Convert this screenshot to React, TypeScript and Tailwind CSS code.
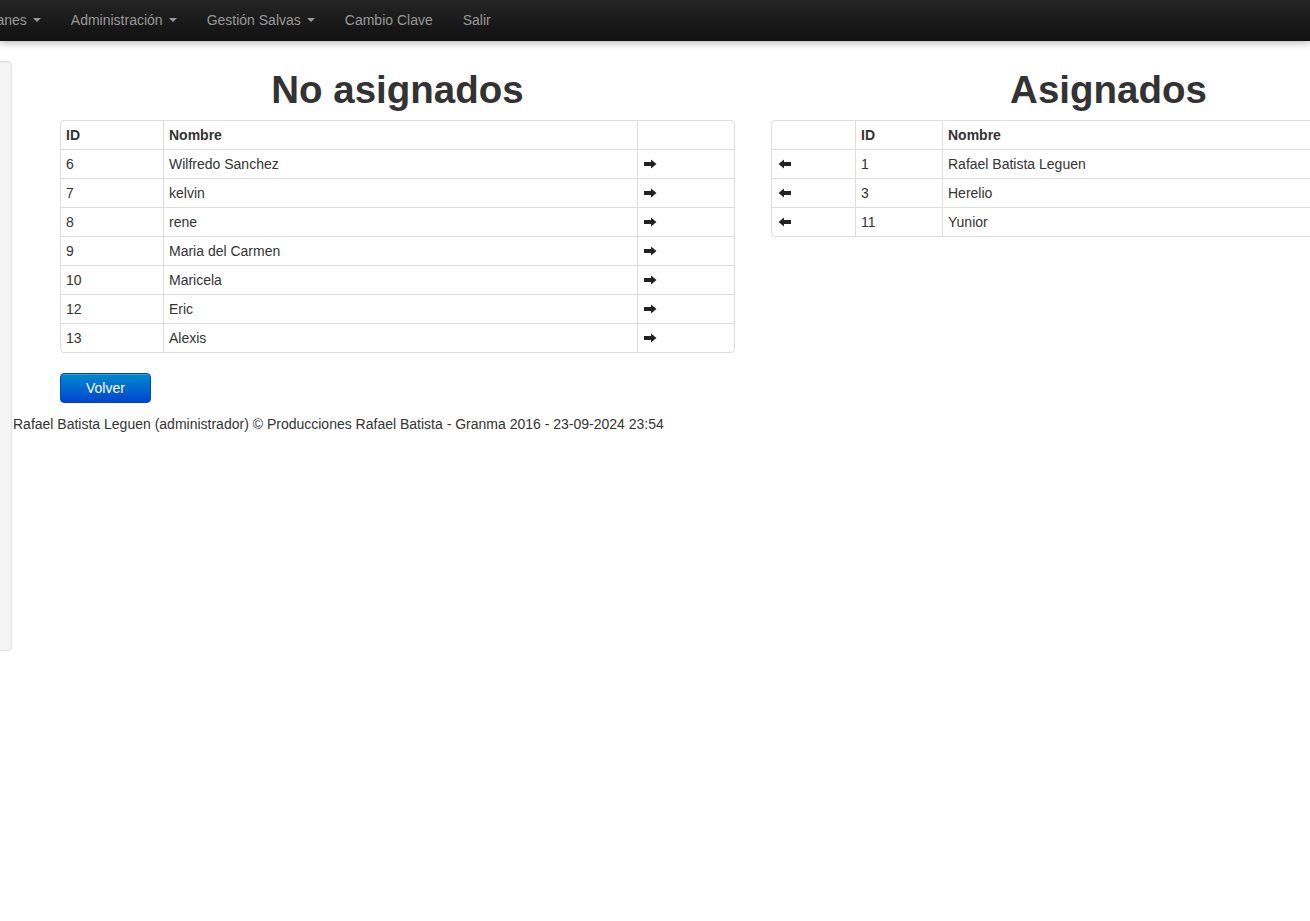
import React from 'react'

const noAsignados = [
  { id: 6, nombre: 'Wilfredo Sanchez' },
  { id: 7, nombre: 'kelvin' },
  { id: 8, nombre: 'rene' },
  { id: 9, nombre: 'Maria del Carmen' },
  { id: 10, nombre: 'Maricela' },
  { id: 12, nombre: 'Eric' },
  { id: 13, nombre: 'Alexis' },
]

const asignados = [
  { id: 1, nombre: 'Rafael Batista Leguen' },
  { id: 3, nombre: 'Herelio' },
  { id: 11, nombre: 'Yunior' },
]

const menu = [
  { label: 'Planes', caret: true },
  { label: 'Administración', caret: true },
  { label: 'Gestión Salvas', caret: true },
  { label: 'Cambio Clave', caret: false },
  { label: 'Salir', caret: false },
]

function Caret() {
  return <span className="ml-[6px] inline-block h-0 w-0 border-x-[4px] border-t-[4px] border-x-transparent border-t-[#999] align-middle" />
}

function ArrowRight() {
  return (
    <svg width="14" height="10" viewBox="0 0 14 10" className="block">
      <path d="M0 3h7V0.5L12.5 5 7 9.5V7H0z" fill="#222" />
    </svg>
  )
}

function ArrowLeft() {
  return (
    <svg width="14" height="10" viewBox="0 0 14 10" className="block">
      <path d="M14 3H7V0.5L1.5 5 7 9.5V7h7z" fill="#222" />
    </svg>
  )
}

const cell = 'border-t border-[#ddd] px-[5px] py-[4px] leading-[20px] align-middle'

export default function App() {
  return (
    <div className="relative h-[921px] w-[1310px] overflow-hidden bg-white text-[14px] text-[#333]" style={{ fontFamily: '"Liberation Sans", Arial, sans-serif' }}>
      {/* navbar */}
      <div className="relative z-10 flex h-[41px] items-center bg-gradient-to-b from-[#242424] to-[#111] pb-[2px] shadow-[0_1px_8px_rgba(0,0,0,0.35)]">
        <ul className="ml-[-31px] flex">
          {menu.map((m) => (
            <li key={m.label} className="flex items-center px-[15px] leading-[20px] text-[#999]">
              {m.label}
              {m.caret && <Caret />}
            </li>
          ))}
        </ul>
      </div>

      <div className="flex">
        {/* sidebar well */}
        <div className="ml-[-200px] mt-[20px] h-[590px] w-[212px] shrink-0 rounded-[4px] border border-[#e3e3e3] bg-[#f5f5f5] shadow-[inset_0_1px_1px_rgba(0,0,0,0.05)]" />

        <div className="flex-1 pt-[19px]">
          <div className="flex gap-[36px] pl-[48px]">
            <div className="w-[675px] shrink-0">
              <h1 className="my-[10px] text-center text-[38.5px] font-bold leading-[40px] text-[#333]">No asignados</h1>
              <table className="mb-[20px] w-full border-separate border-spacing-0 rounded-[4px] border border-[#ddd] text-left">
                <thead>
                  <tr>
                    <th className="w-[102px] px-[5px] py-[4px] leading-[20px] font-bold">ID</th>
                    <th className="border-l border-[#ddd] px-[5px] py-[4px] leading-[20px] font-bold">Nombre</th>
                    <th className="w-[97px] border-l border-[#ddd] px-[5px] py-[4px]"></th>
                  </tr>
                </thead>
                <tbody>
                  {noAsignados.map((r) => (
                    <tr key={r.id}>
                      <td className={cell}>{r.id}</td>
                      <td className={cell + ' border-l'}>{r.nombre}</td>
                      <td className={cell + ' border-l pl-[6px]'}><ArrowRight /></td>
                    </tr>
                  ))}
                </tbody>
              </table>
            </div>

            <div className="w-[675px] shrink-0">
              <h1 className="my-[10px] text-center text-[38.5px] font-bold leading-[40px] text-[#333]">Asignados</h1>
              <table className="w-full border-separate border-spacing-0 rounded-[4px] border border-[#ddd] text-left">
                <thead>
                  <tr>
                    <th className="w-[83px] px-[5px] py-[4px] leading-[20px]"></th>
                    <th className="w-[87px] border-l border-[#ddd] px-[5px] py-[4px] leading-[20px] font-bold">ID</th>
                    <th className="border-l border-[#ddd] px-[5px] py-[4px] leading-[20px] font-bold">Nombre</th>
                  </tr>
                </thead>
                <tbody>
                  {asignados.map((r) => (
                    <tr key={r.id}>
                      <td className={cell + ' pl-[5px]'}><ArrowLeft /></td>
                      <td className={cell + ' border-l'}>{r.id}</td>
                      <td className={cell + ' border-l'}>{r.nombre}</td>
                    </tr>
                  ))}
                </tbody>
              </table>
            </div>
          </div>

          <div className="pl-[48px]">
            <button className="h-[30px] rounded-[4px] border border-[#0044cc] bg-gradient-to-b from-[#0088cc] to-[#0044cc] px-[25px] text-[14px] leading-[20px] text-white shadow-[inset_0_1px_0_rgba(255,255,255,0.2)]">
              Volver
            </button>
          </div>

          <p className="mt-[11px] pl-[1px] leading-[20px]">
            Rafael Batista Leguen (administrador) © Producciones Rafael Batista - Granma 2016 - 23-09-2024 23:54
          </p>
        </div>
      </div>
    </div>
  )
}
